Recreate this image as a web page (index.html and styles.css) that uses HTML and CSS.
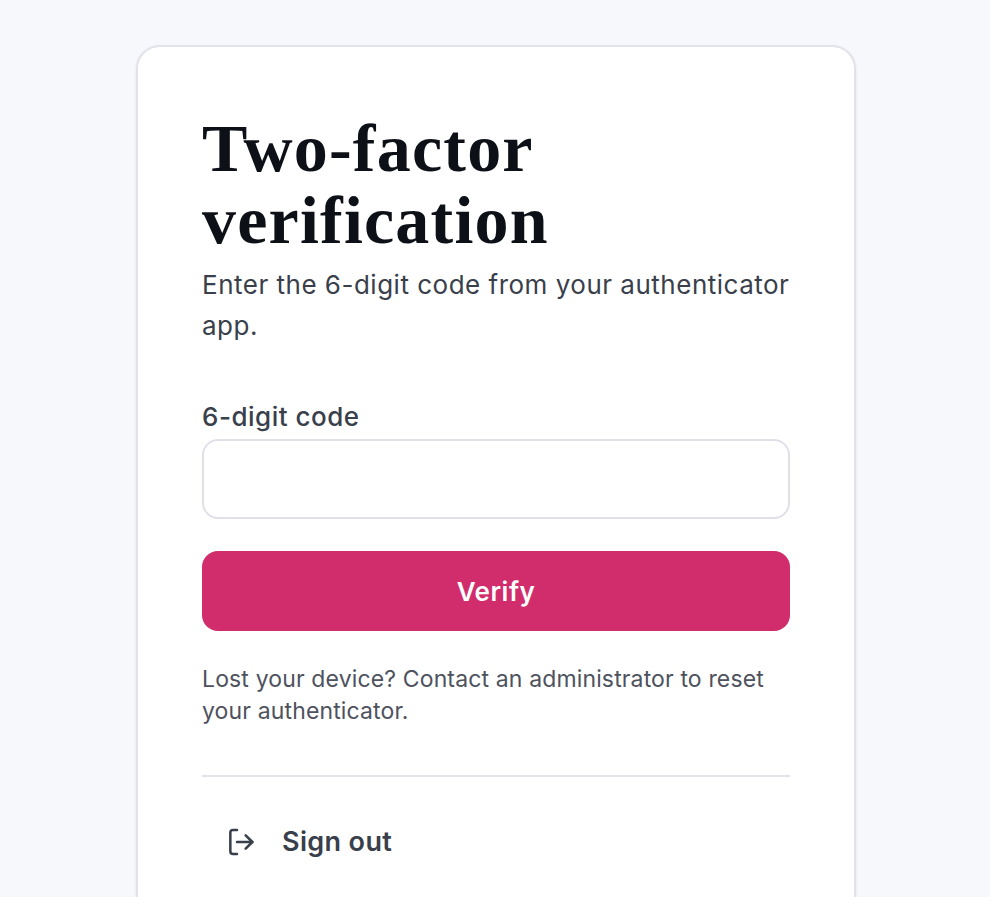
FILE: index.html
```html
<!DOCTYPE html>
<html lang="en">
<head>
    <meta charset="UTF-8">
    <meta name="viewport" content="width=device-width, initial-scale=1.0">
    <title>Two-factor verification</title>
    <link rel="stylesheet" href="styles.css">
</head>
<body>
    <div class="card">
        <h1>Two-factor verification</h1>
        <p class="subtitle">Enter the 6-digit code from your authenticator app.</p>

        <form class="verify-form">
            <label for="code">6-digit code</label>
            <input id="code" type="text" inputmode="numeric" maxlength="6" autocomplete="one-time-code">
            <button type="button" class="verify-btn">Verify</button>
        </form>

        <p class="help">Lost your device? Contact an administrator to reset your authenticator.</p>

        <div class="divider"></div>

        <a class="sign-out" href="#">
            <svg width="32" height="32" viewBox="0 0 24 24" fill="none" stroke="#3a3f4c" stroke-width="1.9" stroke-linecap="round" stroke-linejoin="round">
                <path d="M9 21H6a2 2 0 0 1-2-2V5a2 2 0 0 1 2-2h3"/>
                <path d="M15.5 17l5-5-5-5"/>
                <path d="M20.5 12H9"/>
            </svg>
            Sign out
        </a>
    </div>
</body>
</html>
```

FILE: styles.css
```css
* {
    margin: 0;
    padding: 0;
    box-sizing: border-box;
}
body {
    font-family: Inter, 'Noto Sans', sans-serif;
    background: #f7f8fc;
    height: 100vh;
    padding: 45px 19px 0 21px;
    display: flex;
    justify-content: center;
    align-items: flex-start;
    overflow: hidden;
}
.card {
    width: 720px;
    flex-shrink: 0;
    background: white;
    border: 2px solid #e2e3ea;
    border-radius: 24px;
    padding: 65px 64px 64px;
    box-shadow: 0 1px 3px rgba(0, 0, 0, 0.08);
}
h1 {
    font-family: 'Liberation Serif', serif;
    font-size: 68px;
    line-height: 72px;
    font-weight: 700;
    letter-spacing: 1.2px;
    color: #0d1117;
}
.subtitle {
    margin-top: 8px;
    font-size: 26px;
    line-height: 41px;
    letter-spacing: 0.5px;
    color: #3a3f4c;
}
.verify-form {
    margin-top: 51px;
}
label {
    display: block;
    margin-bottom: 2px;
    font-size: 26px;
    line-height: 40px;
    font-weight: 500;
    letter-spacing: 0.5px;
    color: #3a3f4c;
}
input {
    display: block;
    width: 100%;
    height: 80px;
    border: 2px solid #e0e1e8;
    border-radius: 16px;
    background: white;
}
.verify-btn {
    display: block;
    width: 100%;
    height: 80px;
    margin-top: 32px;
    background: #d12d6c;
    border: none;
    border-radius: 16px;
    color: white;
    font-family: inherit;
    font-size: 26px;
    font-weight: 600;
    letter-spacing: 0.5px;
}
.help {
    margin-top: 32px;
    font-size: 23px;
    line-height: 32px;
    letter-spacing: 0.14px;
    color: #4e525e;
}
.divider {
    margin-top: 48px;
    border-top: 2px solid #e2e3ea;
}
.sign-out {
    display: flex;
    align-items: center;
    gap: 25px;
    padding: 48px 24px 24px 23px;
    font-size: 27px;
    font-weight: 600;
    letter-spacing: 0.35px;
    color: #3a3f4c;
    text-decoration: none;
}
.sign-out svg {
    flex-shrink: 0;
}
```
